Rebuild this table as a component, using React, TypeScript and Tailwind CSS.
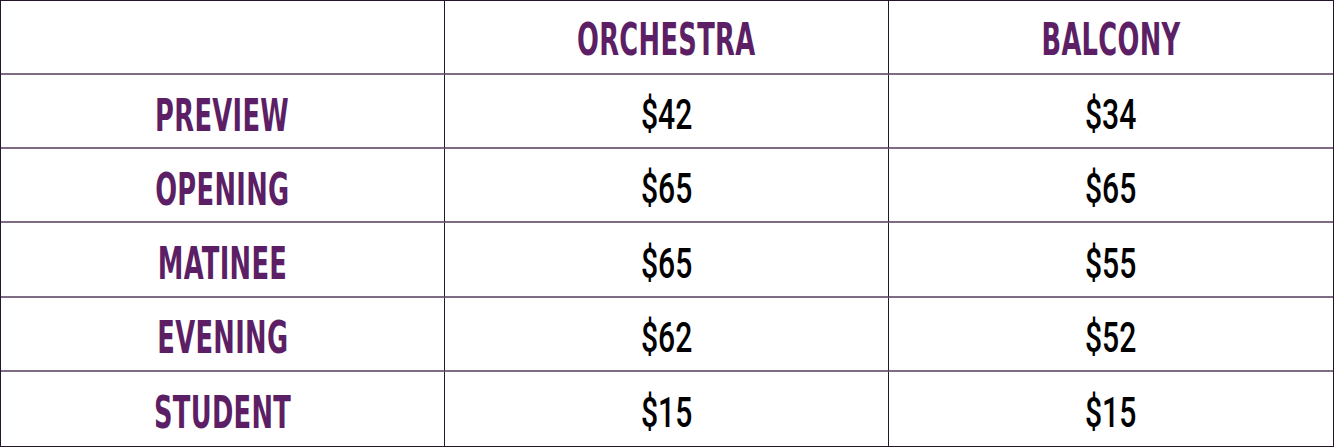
const rows = [
  { label: 'PREVIEW', orchestra: '$42', balcony: '$34' },
  { label: 'OPENING', orchestra: '$65', balcony: '$65' },
  { label: 'MATINEE', orchestra: '$65', balcony: '$55' },
  { label: 'EVENING', orchestra: '$62', balcony: '$52' },
  { label: 'STUDENT', orchestra: '$15', balcony: '$15' },
];

function Label({ children }: { children: string }) {
  return (
    <span className="inline-block scale-x-[0.65] font-['DejaVu_Sans_Condensed','DejaVu_Sans',sans-serif] font-bold text-[44px] leading-none tracking-[0.5px] text-[#5c1f66]">
      {children}
    </span>
  );
}

function Price({ children }: { children: string }) {
  return (
    <span className="inline-block scale-x-[0.7] font-['Roboto','DejaVu_Sans',sans-serif] font-medium text-[43px] leading-none text-black">
      {children}
    </span>
  );
}

export default function App() {
  return (
    <div className="w-[1334px] h-[447px] bg-white">
      <div className="grid h-full w-full grid-cols-3 grid-rows-6 border border-[#26142c]">
        {/* header */}
        <div className="border-r border-b-2 border-r-[#26142c] border-b-[#7e6c85]" />
        <div className="flex items-center justify-center pt-[5px] border-r border-b-2 border-r-[#26142c] border-b-[#7e6c85]">
          <Label>ORCHESTRA</Label>
        </div>
        <div className="flex items-center justify-center pt-[5px] border-b-2 border-b-[#7e6c85]">
          <Label>BALCONY</Label>
        </div>

        {rows.map((r, i) => {
          const last = i === rows.length - 1;
          const bottom = last ? '' : 'border-b-2 border-b-[#7e6c85]';
          return (
            <div key={r.label} className="contents">
              <div className={`flex items-center justify-center pt-[9px] border-r border-r-[#26142c] ${bottom}`}>
                <Label>{r.label}</Label>
              </div>
              <div className={`flex items-center justify-center pt-[7px] border-r border-r-[#26142c] ${bottom}`}>
                <Price>{r.orchestra}</Price>
              </div>
              <div className={`flex items-center justify-center pt-[7px] ${bottom}`}>
                <Price>{r.balcony}</Price>
              </div>
            </div>
          );
        })}
      </div>
    </div>
  );
}
